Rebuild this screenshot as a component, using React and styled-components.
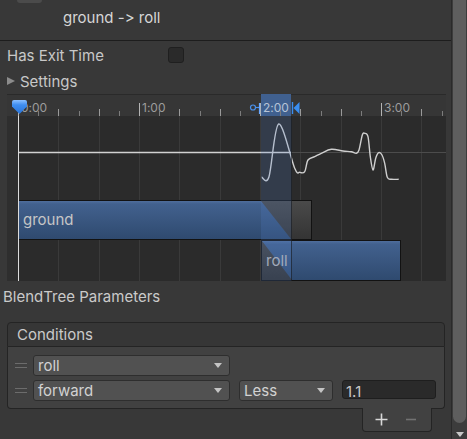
import React from 'react';
import styled, { createGlobalStyle } from 'styled-components';

const Global = createGlobalStyle`
  html, body { margin: 0; padding: 0; background: #383838; }
  body {
    font-family: Inter, "Noto Sans", sans-serif;
    font-variant-ligatures: none;
    font-feature-settings: "calt" 0, "liga" 0;
  }
`;

const T0 = 11;
const PPM = 121;
const tx = (m) => T0 + m * PPM;

const Root = styled.div`
  width: 467px;
  height: 439px;
  overflow: hidden;
  display: flex;
  background: #383838;
  color: #c8c8c8;
  font-size: 15px;
`;
const Main = styled.div`
  width: 451px;
  display: flex;
  flex-direction: column;
`;
const Header = styled.div`
  height: 40px;
  border-bottom: 1px solid #1d1d1d;
  display: flex;
  align-items: flex-start;
  padding-left: 17px;
`;
const Stub = styled.div`
  width: 25px;
  height: 3px;
  background: #4b4b4b;
  border-radius: 0 0 3px 3px;
`;
const Title = styled.div`
  margin-left: 21px;
  margin-top: 9px;
  line-height: 18px;
  color: #d6d6d6;
  font-feature-settings: "calt" 0, "liga" 0;
`;
const PropRow = styled.div`
  display: flex;
  align-items: center;
  height: 20px;
  margin-top: ${(p) => p.$mt}px;
  padding-left: 7px;
`;
const PropLabel = styled.div`
  width: 161px;
`;
const Checkbox = styled.div`
  width: 16px;
  height: 16px;
  box-sizing: border-box;
  background: #2a2a2a;
  border: 1px solid #1f1f1f;
  border-radius: 3px;
`;
const FoldArrow = styled.div`
  width: 0;
  height: 0;
  border-left: 8px solid #8c8c8c;
  border-top: 4.5px solid transparent;
  border-bottom: 4.5px solid transparent;
  margin-right: 5px;
`;
const Timeline = styled.div`
  margin: 3px 0 0 7px;
  width: 439px;
  height: 187px;
  position: relative;
  display: flex;
  flex-direction: column;
  background: #2b2b2b;
`;
const Ruler = styled.svg`
  display: block;
  width: 439px;
  height: 22px;
`;
const CurveArea = styled.svg`
  display: block;
  width: 439px;
  height: 84px;
`;
const Bars = styled.div`
  position: relative;
  height: 81px;
`;
const BarsGrid = styled.svg`
  position: absolute;
  left: 0;
  top: 0;
  width: 439px;
  height: 81px;
`;
const Clip = styled.div`
  position: absolute;
  left: ${(p) => p.$x}px;
  top: ${(p) => p.$y}px;
  width: ${(p) => p.$w}px;
  height: ${(p) => p.$h}px;
  box-sizing: border-box;
  border: 1px solid #121212;
  border-left: ${(p) => (p.$noLeft ? 'none' : '1px solid #121212')};
  background: ${(p) =>
    p.$gray
      ? 'linear-gradient(#4a4a4a, #343434)'
      : 'linear-gradient(#4f6e9c 0, #42618e 8%, #2f4a6f 100%)'};
  overflow: hidden;
`;
const BlueFill = styled.div`
  position: absolute;
  left: 0;
  top: 0;
  bottom: 0;
  width: ${(p) => p.$w}px;
  clip-path: polygon(0 0, ${(p) => p.$cut}px 0, 100% 100%, 0 100%);
  background: linear-gradient(#4f6e9c 0, #42618e 8%, #2f4a6f 100%);
`;
const GrayWedge = styled.div`
  position: absolute;
  left: 0;
  top: 0;
  bottom: 0;
  width: ${(p) => p.$w}px;
  clip-path: polygon(0 0, 100% 100%, 0 100%);
  background: linear-gradient(#464646, #323232);
`;
const ClipLabel = styled.div`
  position: relative;
  padding-left: ${(p) => p.$pl}px;
  line-height: ${(p) => p.$lh}px;
  color: ${(p) => p.$c};
  font-size: 15px;
`;
const Playhead = styled.div`
  position: absolute;
  left: ${T0}px;
  top: 22px;
  bottom: 0;
  width: 1px;
  background: #dcdcdc;
`;
const TransOverlay = styled.div`
  position: absolute;
  left: 254px;
  width: 30px;
  top: 22px;
  bottom: 0;
  background: rgba(85, 130, 205, 0.2);
  border-right: 1px solid rgba(20, 20, 20, 0.6);
`;
const SectionLabel = styled.div`
  margin-top: 6px;
  height: 20px;
  line-height: 20px;
  padding-left: 3px;
  color: #cacaca;
`;
const Conditions = styled.div`
  margin: 15px 0 0 7px;
  width: 438px;
  display: flex;
  flex-direction: column;
`;
const CondHeader = styled.div`
  height: 25px;
  box-sizing: border-box;
  border: 1px solid #242424;
  border-radius: 4px 4px 0 0;
  background: #363636;
  padding-left: 9px;
  line-height: 23px;
  color: #cacaca;
`;
const CondBody = styled.div`
  background: #414141;
  border: 1px solid #242424;
  border-top: none;
  border-radius: 0 0 4px 4px;
  padding: 8px 8px 7px 7px;
  display: flex;
  flex-direction: column;
  gap: 4px;
`;
const CondRow = styled.div`
  display: flex;
  align-items: center;
  height: 21px;
`;
const Handle = styled.div`
  width: 12px;
  height: 3px;
  border-top: 1px solid #6c6c6c;
  border-bottom: 1px solid #6c6c6c;
  margin-right: 6px;
`;
const Dropdown = styled.div`
  width: ${(p) => p.$w}px;
  height: 21px;
  box-sizing: border-box;
  margin-right: 9px;
  background: #515151;
  border: 1px solid #2e2e2e;
  border-radius: 3px;
  display: flex;
  align-items: center;
  justify-content: space-between;
  padding: 0 7px 0 4px;
  color: #d2d2d2;
`;
const DropArrow = styled.div`
  width: 0;
  height: 0;
  border-left: 4.5px solid transparent;
  border-right: 4.5px solid transparent;
  border-top: 5px solid #c4c4c4;
`;
const ValueField = styled.div`
  align-self: flex-start;
  width: 94px;
  height: 19px;
  box-sizing: border-box;
  background: #2a2a2a;
  border: 1px solid #1e1e1e;
  border-radius: 3px;
  padding: 2px 0 0 3px;
  line-height: 17px;
  color: #c8c8c8;
`;
const Footer = styled.div`
  align-self: flex-end;
  margin: -1px 13px 0 0;
  width: 70px;
  height: 24px;
  box-sizing: border-box;
  background: #414141;
  border: 1px solid #242424;
  border-top: none;
  border-radius: 0 0 4px 4px;
  display: flex;
  padding-left: 3px;
`;
const FootBtn = styled.div`
  width: 30px;
  display: flex;
  align-items: center;
  justify-content: center;
`;
const Scroll = styled.div`
  width: 16px;
  box-sizing: border-box;
  border-left: 1px solid #2a2a2a;
  background: #3c3c3c;
  display: flex;
  flex-direction: column;
  align-items: center;
`;
const Thumb = styled.div`
  width: 13px;
  height: 423px;
  background: #5e5e5e;
  border-radius: 0 0 7px 7px;
`;
const ScrollArrow = styled.div`
  margin-top: 9px;
  width: 0;
  height: 0;
  border-left: 4px solid transparent;
  border-right: 4px solid transparent;
  border-top: 5px solid #c8c8c8;
`;

function smooth(pts) {
  let d = `M${pts[0][0]},${pts[0][1]}`;
  for (let i = 0; i < pts.length - 1; i++) {
    const p0 = pts[i - 1] || pts[i];
    const p1 = pts[i];
    const p2 = pts[i + 1];
    const p3 = pts[i + 2] || p2;
    const c1x = p1[0] + (p2[0] - p0[0]) / 6;
    const c1y = p1[1] + (p2[1] - p0[1]) / 6;
    const c2x = p2[0] - (p3[0] - p1[0]) / 6;
    const c2y = p2[1] - (p3[1] - p1[1]) / 6;
    d += ` C${c1x.toFixed(1)},${c1y.toFixed(1)} ${c2x.toFixed(1)},${c2y.toFixed(1)} ${p2[0]},${p2[1]}`;
  }
  return d;
}

const curvePts = [
  [254.7, 61.3], [262, 60.7], [271.7, 8], [287.7, 52.3], [292.7, 56.3], [297.7, 55.7],
  [301, 44], [307.7, 40.7], [314.3, 37.3], [324.3, 33.3], [336, 35], [344.3, 35.7],
  [349.3, 37.3], [352, 34], [355.3, 19], [357.7, 17.3], [361, 20.7], [363.3, 40.7],
  [366, 54], [368.7, 42.3], [371.7, 36.7], [375, 39], [377.7, 47.3], [380.3, 61.3],
  [384.3, 63.3], [391.7, 63.3],
];

const gridXs = Array.from({ length: 11 }, (_, k) => Math.round(T0 + (k * PPM) / 3) + 0.5);

function GridLines({ h }) {
  return (
    <>
      <rect x="0" y="0" width={T0} height={h} fill="#2e2e2e" />
      {gridXs.slice(1).map((x) => (
        <line key={x} x1={x} x2={x} y1="0" y2={h} stroke="#3a3a3a" strokeWidth="1" />
      ))}
    </>
  );
}

function RulerSvg() {
  const ticks = [];
  for (let k = 0; k <= 21; k++) {
    const x = Math.round(T0 + (k * PPM) / 6) + 0.5;
    const major = k % 6 === 0;
    const tall = k % 2 === 0;
    const y1 = major ? 9 : tall ? 15 : 17;
    ticks.push(
      <line key={k} x1={x} x2={x} y1={y1} y2="22" stroke={major ? '#b4b4b4' : tall ? '#9a9a9a' : '#7c7c7c'} strokeWidth="1" />
    );
  }
  const labels = ['0:00', '1:00', '2:00', '3:00'];
  const x0 = 5;
  return (
    <Ruler viewBox="0 0 439 22">
      <defs>
        <linearGradient id="mk" x1="0" y1="0" x2="0" y2="1">
          <stop offset="0" stopColor="#8cc0ff" />
          <stop offset="0.35" stopColor="#3f8ef0" />
          <stop offset="1" stopColor="#2a74d8" />
        </linearGradient>
      </defs>
      <rect x="0" y="0" width="439" height="22" fill="#363636" />
      <line x1="0" x2="439" y1="0.5" y2="0.5" stroke="#2a2a2a" />
      <rect x="254" y="0" width="30" height="22" fill="#40608f" />
      {ticks}
      {labels.map((l, i) => (
        <text key={l} x={tx(i) + 3} y="18" fontSize="12" fontFamily="Inter, sans-serif" fill={i === 2 ? '#b6c3d6' : '#9c9c9c'}>
          {l}
        </text>
      ))}
      <circle cx="246" cy="13.5" r="2.5" fill="none" stroke="#4a92ee" strokeWidth="1.2" />
      <line x1="248.5" x2="252" y1="13.5" y2="13.5" stroke="#4a92ee" strokeWidth="1.2" />
      <line x1="252.5" x2="252.5" y1="9" y2="20" stroke="#6aa8ff" strokeWidth="1.2" />
      <line x1="285.5" x2="285.5" y1="8" y2="20" stroke="#3a8ef0" strokeWidth="1.4" />
      <path d="M286.5,14 L292.5,8 L292.5,20 Z" fill="#3a8ef0" />
      <path
        d={`M${x0 + 2},6 H${x0 + 13} Q${x0 + 15},6 ${x0 + 15},8 V12.5 L${x0 + 7.5},20 L${x0},12.5 V8 Q${x0},6 ${x0 + 2},6 Z`}
        fill="url(#mk)"
      />
    </Ruler>
  );
}

function CurveSvg() {
  return (
    <CurveArea viewBox="0 0 439 84">
      <GridLines h={84} />
      <line x1="284" x2="439" y1="36.5" y2="36.5" stroke="#4c4c4c" strokeWidth="1" />
      <line x1={T0} x2="284" y1="36.5" y2="36.5" stroke="#d2d2d2" strokeWidth="1.4" />
      <path d={smooth(curvePts)} fill="none" stroke="#cfcfcf" strokeWidth="1.4" strokeLinejoin="round" />
    </CurveArea>
  );
}

function PlusIcon() {
  return (
    <svg width="13" height="13" viewBox="0 0 13 13">
      <path d="M6.5 0.5 V12.5 M0.5 6.5 H12.5" stroke="#d8d8d8" strokeWidth="1.6" />
    </svg>
  );
}
function MinusIcon() {
  return (
    <svg width="12" height="13" viewBox="0 0 12 13">
      <path d="M1 6.5 H11" stroke="#727272" strokeWidth="1.6" />
    </svg>
  );
}

export default function App() {
  return (
    <Root>
      <Global />
      <Main>
        <Header>
          <Stub />
          <Title>ground -&gt; roll</Title>
        </Header>
        <PropRow $mt={4}>
          <PropLabel>Has Exit Time</PropLabel>
          <Checkbox />
        </PropRow>
        <PropRow $mt={6}>
          <FoldArrow />
          <span>Settings</span>
        </PropRow>
        <Timeline>
          <RulerSvg />
          <CurveSvg />
          <Bars>
            <BarsGrid viewBox="0 0 439 81">
              <GridLines h={81} />
            </BarsGrid>
            <Clip $x={12} $y={0} $w={293} $h={40} $gray $noLeft>
              <BlueFill $w={272} $cut={242}>
                <ClipLabel $pl={4} $lh={38} $c="#c6c6c6">ground</ClipLabel>
              </BlueFill>
            </Clip>
            <Clip $x={254} $y={40} $w={140} $h={41}>
              <GrayWedge $w={30} />
              <ClipLabel $pl={4} $lh={39} $c="#b4b4b4">roll</ClipLabel>
            </Clip>
          </Bars>
          <Playhead />
          <TransOverlay />
        </Timeline>
        <SectionLabel>BlendTree Parameters</SectionLabel>
        <Conditions>
          <CondHeader>Conditions</CondHeader>
          <CondBody>
            <CondRow>
              <Handle />
              <Dropdown $w={197}>
                <span>roll</span>
                <DropArrow />
              </Dropdown>
            </CondRow>
            <CondRow>
              <Handle />
              <Dropdown $w={197}>
                <span>forward</span>
                <DropArrow />
              </Dropdown>
              <Dropdown $w={94}>
                <span>Less</span>
                <DropArrow />
              </Dropdown>
              <ValueField>1.1</ValueField>
            </CondRow>
          </CondBody>
          <Footer>
            <FootBtn><PlusIcon /></FootBtn>
            <FootBtn><MinusIcon /></FootBtn>
          </Footer>
        </Conditions>
      </Main>
      <Scroll>
        <Thumb />
        <ScrollArrow />
      </Scroll>
    </Root>
  );
}
